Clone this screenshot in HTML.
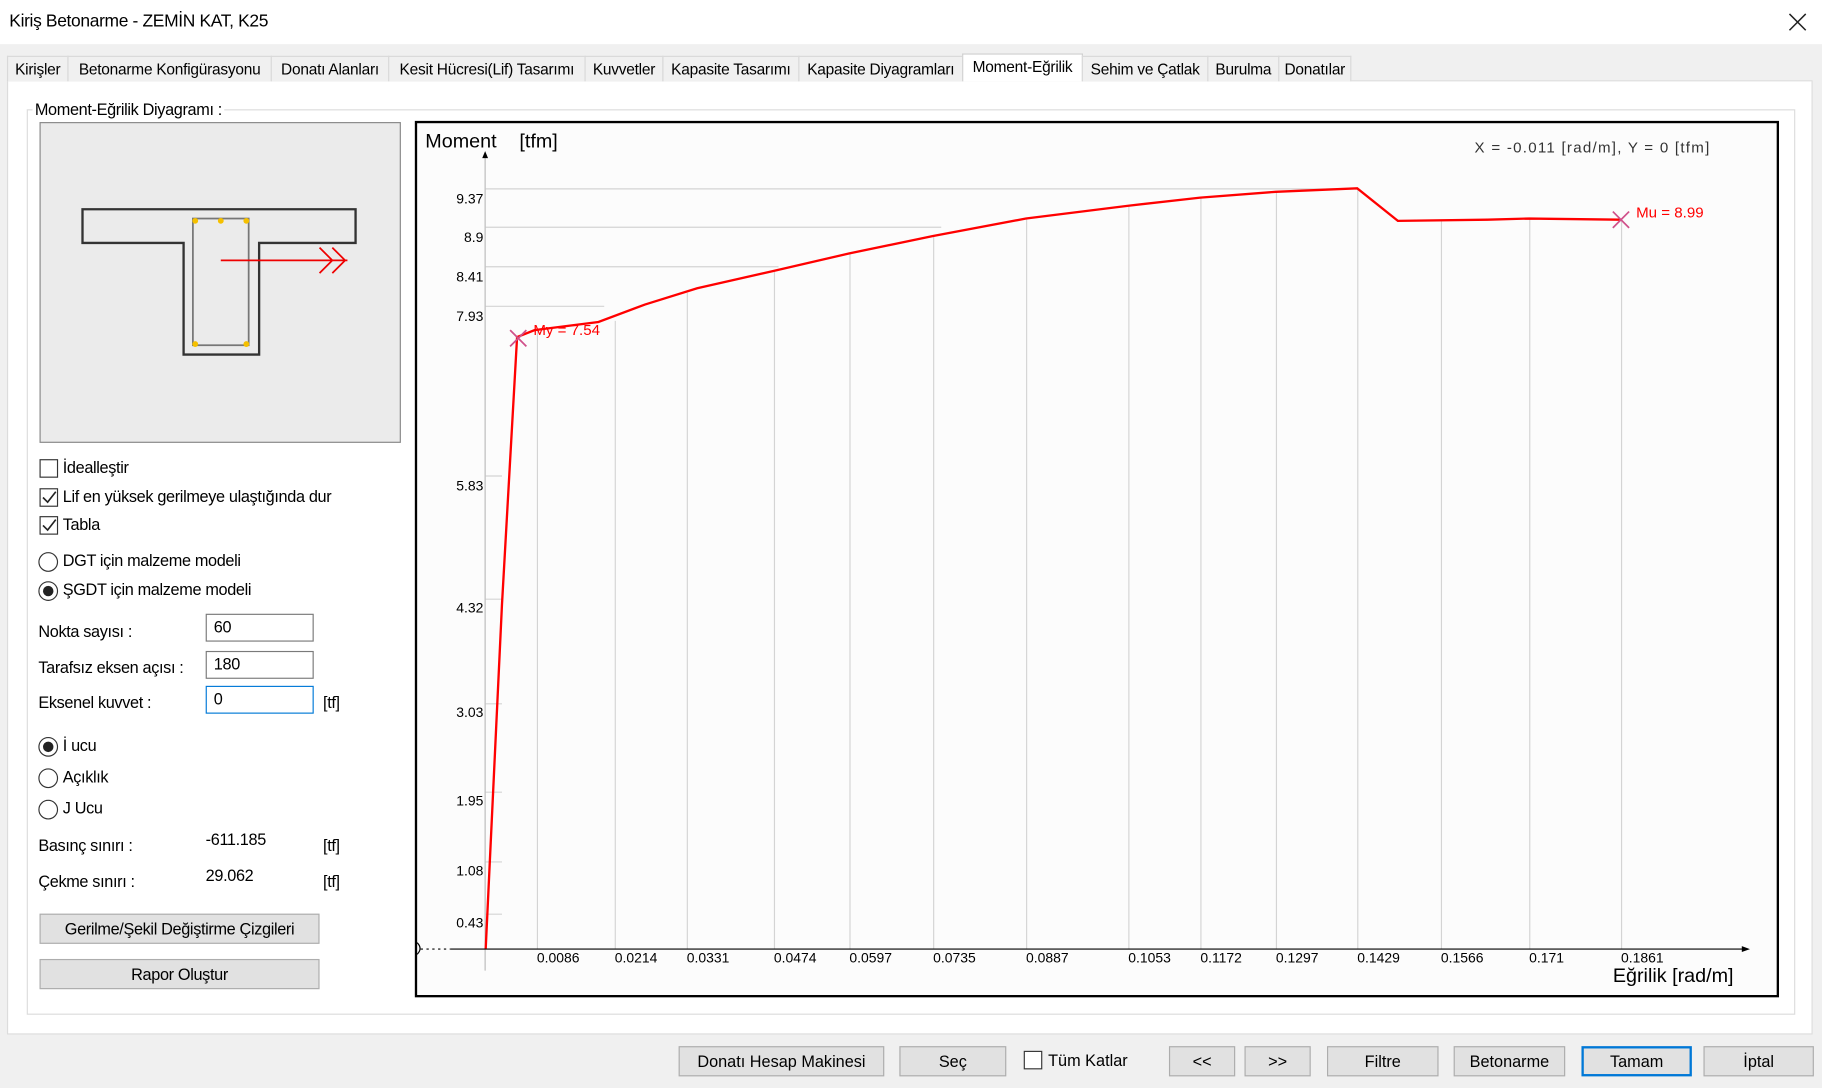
<!DOCTYPE html>
<html><head><meta charset="utf-8"><style>
*{box-sizing:border-box;margin:0;padding:0}
html,body{width:1822px;height:1088px;overflow:hidden;background:#f0f0f0}
#w{position:absolute;left:0;top:0;width:1568px;height:936px;transform:scale(1.16199,1.16239);transform-origin:0 0;font-family:"Liberation Sans",sans-serif;font-size:14px;color:#000;background:#f0f0f0}
.a{position:absolute;white-space:nowrap}
.tab{position:absolute;top:48px;height:22px;border:1px solid #d9d9d9;border-bottom:none;background:#f0f0f0;padding:3px 0 0;font-size:13.3px;text-align:center;overflow:hidden;letter-spacing:-0.2px}
.cb{position:absolute;width:16px;height:16px;border:1px solid #333;background:#fff}
.rb{position:absolute;width:17px;height:17px;border:1px solid #333;border-radius:50%;background:#fff}
.rb.on::after{content:"";position:absolute;left:3px;top:3px;width:9px;height:9px;border-radius:50%;background:#222}
.inp{position:absolute;left:177px;width:93px;height:24px;border:1px solid #7a7a7a;background:#fff;padding:2px 6px}
.btn{position:absolute;height:26px;border:1px solid #adadad;background:#e1e1e1;text-align:center;line-height:24px;font-size:14px}
</style></head><body><div id="w">
<div class="a" style="left:0;top:0;width:1568px;height:38px;background:#fff"></div>
<div class="a" style="left:8px;top:10px;font-size:15px;letter-spacing:-0.3px">Kiriş Betonarme - ZEMİN KAT, K25</div>
<svg class="a" style="left:1539px;top:11px" width="16" height="16"><path d="M1 1L15 15M15 1L1 15" stroke="#222" stroke-width="1.3"/></svg>
<div class="a" style="left:6px;top:69px;width:1554px;height:821px;background:#fff;border:1px solid #dcdcdc"></div>
<div class="tab" style="left:6px;width:53px">Kirişler</div>
<div class="tab" style="left:58px;width:176px">Betonarme Konfigürasyonu</div>
<div class="tab" style="left:233px;width:102px">Donatı Alanları</div>
<div class="tab" style="left:334px;width:170px">Kesit Hücresi(Lif) Tasarımı</div>
<div class="tab" style="left:503px;width:68px">Kuvvetler</div>
<div class="tab" style="left:570px;width:118px">Kapasite Tasarımı</div>
<div class="tab" style="left:687px;width:142px">Kapasite Diyagramları</div>
<div class="tab" style="left:828px;top:46px;height:24px;width:104px;background:#fff;border-color:#d0d0d0">Moment-Eğrilik</div>
<div class="tab" style="left:931px;width:109px">Sehim ve Çatlak</div>
<div class="tab" style="left:1039px;width:62px">Burulma</div>
<div class="tab" style="left:1100px;width:63px">Donatılar</div>
<div class="a" style="left:23px;top:94px;width:1522px;height:779px;border:1px solid #dcdcdc"></div>
<div class="a" style="left:28px;top:86px;background:#fff;padding:0 2px;letter-spacing:-0.3px">Moment-Eğrilik Diyagramı :</div>
<div class="a" style="left:34px;top:105px;width:311px;height:276px;background:#ebebeb;border:1px solid #888"></div>
<svg class="a" style="left:34px;top:105px" width="311" height="276">
<path d="M37 75H272V104H189V200H124V104H37Z" fill="none" stroke="#333" stroke-width="2"/>
<rect x="132" y="83" width="48" height="109" fill="none" stroke="#777" stroke-width="1.5"/>
<g fill="#f5c000"><circle cx="134" cy="85" r="2.5"/><circle cx="156" cy="85" r="2.5"/><circle cx="178" cy="85" r="2.5"/><circle cx="134" cy="191" r="2.5"/><circle cx="178" cy="191" r="2.5"/></g>
<path d="M156 119H265M241 108L252 119L241 130M252 108L263 119L252 130" fill="none" stroke="#e00" stroke-width="1.5"/>
</svg>
<div style="letter-spacing:-0.3px">
<div class="cb" style="left:34px;top:395px"></div><div class="a" style="left:54px;top:394px">İdealleştir</div>
<div class="cb" style="left:34px;top:420px"></div><svg class="a" style="left:36px;top:422px" width="13" height="13"><path d="M1 6L5 10L12 1" fill="none" stroke="#222" stroke-width="1.4"/></svg><div class="a" style="left:54px;top:419px">Lif en yüksek gerilmeye ulaştığında dur</div>
<div class="cb" style="left:34px;top:444px"></div><svg class="a" style="left:36px;top:446px" width="13" height="13"><path d="M1 6L5 10L12 1" fill="none" stroke="#222" stroke-width="1.4"/></svg><div class="a" style="left:54px;top:443px">Tabla</div>
<div class="rb" style="left:33px;top:475px"></div><div class="a" style="left:54px;top:474px">DGT için malzeme modeli</div>
<div class="rb on" style="left:33px;top:500px"></div><div class="a" style="left:54px;top:499px">ŞGDT için malzeme modeli</div>
<div class="a" style="left:33px;top:535px">Nokta sayısı :</div><div class="inp" style="top:528px">60</div>
<div class="a" style="left:33px;top:566px">Tarafsız eksen açısı :</div><div class="inp" style="top:560px">180</div>
<div class="a" style="left:33px;top:596px">Eksenel kuvvet :</div><div class="inp" style="top:590px;border-color:#0078d7">0</div><div class="a" style="left:278px;top:596px">[tf]</div>
<div class="rb on" style="left:33px;top:634px"></div><div class="a" style="left:54px;top:633px">İ ucu</div>
<div class="rb" style="left:33px;top:661px"></div><div class="a" style="left:54px;top:660px">Açıklık</div>
<div class="rb" style="left:33px;top:688px"></div><div class="a" style="left:54px;top:687px">J Ucu</div>
<div class="a" style="left:33px;top:719px">Basınç sınırı :</div><div class="a" style="left:177px;top:714px">-611.185</div><div class="a" style="left:278px;top:719px">[tf]</div>
<div class="a" style="left:33px;top:750px">Çekme sınırı :</div><div class="a" style="left:177px;top:745px">29.062</div><div class="a" style="left:278px;top:750px">[tf]</div>
<div class="btn" style="left:34px;top:786px;width:241px">Gerilme/Şekil Değiştirme Çizgileri</div>
<div class="btn" style="left:34px;top:825px;width:241px">Rapor Oluştur</div>
</div>
<div class="a" style="left:357px;top:104px;width:1174px;height:754px;background:#fcfcfc;border:2px solid #000"></div>
<svg class="a" style="left:0;top:0" width="1568" height="936" font-family="Liberation Sans,sans-serif">
<g stroke="#d4d4d4" stroke-width="1" fill="none">
<path d="M418 162.5H1168M418 195.5H810M418 229.5H670M418 263.5H520M418 409.5H432M418 515.5H432M418 605.5H432M418 681.5H432M418 741.5H432M418 786.5H432"/>
<path d="M462.5 284V816M529.5 276V816M591.5 252V816M666.5 234V816M731.5 218V816M803.5 203V816M883.5 188V816M971.5 177V816M1033.5 170V816M1098.5 165V816M1168.5 162V816M1240.5 190V816M1316.5 188V816M1395.5 189V816"/>
</g>
<path d="M417.5 132V835" stroke="#bbb"/><path d="M415 136L417.5 130L420 136Z" fill="#000"/>
<path d="M388 816.5H1503" stroke="#000"/><path d="M362 816.5H388" stroke="#000" stroke-dasharray="2 3"/><path d="M1499 814L1506 816.5L1499 819Z" fill="#000"/>
<path d="M359 811Q364 816 359 821" fill="none" stroke="#000"/>
<g font-size="12" text-anchor="end" fill="#000"><text x="416" y="175">9.37</text><text x="416" y="208">8.9</text><text x="416" y="242">8.41</text><text x="416" y="276">7.93</text><text x="416" y="422">5.83</text><text x="416" y="527">4.32</text><text x="416" y="617">3.03</text><text x="416" y="693">1.95</text><text x="416" y="753">1.08</text><text x="416" y="798">0.43</text></g>
<g font-size="12" fill="#000"><text x="462" y="828">0.0086</text><text x="529" y="828">0.0214</text><text x="591" y="828">0.0331</text><text x="666" y="828">0.0474</text><text x="731" y="828">0.0597</text><text x="803" y="828">0.0735</text><text x="883" y="828">0.0887</text><text x="971" y="828">0.1053</text><text x="1033" y="828">0.1172</text><text x="1098" y="828">0.1297</text><text x="1168" y="828">0.1429</text><text x="1240" y="828">0.1566</text><text x="1316" y="828">0.171</text><text x="1395" y="828">0.1861</text></g>
<text x="366" y="127" font-size="17">Moment</text><text x="447" y="127" font-size="17">[tfm]</text>
<text x="1388" y="845" font-size="17">Eğrilik [rad/m]</text>
<text x="1269" y="131" font-size="13" fill="#333" textLength="202">X = -0.011 [rad/m],  Y = 0 [tfm]</text>
<polyline points="418,816 432,520 445,290 460,284 515,277 555,262 600,248 666,233 731,218 803,203 883,188 971,177 1033,170 1098,165 1168,162 1203,190 1280,189 1316,188 1395,189" fill="none" stroke="#f00" stroke-width="2"/>
<path d="M439 284L453 298M453 284L439 298M1388 182L1402 196M1402 182L1388 196" stroke="#d0508a" stroke-width="1.5"/>
<text x="459" y="288" font-size="13" fill="#f00">My = 7.54</text>
<text x="1408" y="187" font-size="13" fill="#f00">Mu = 8.99</text>
</svg>
<div class="btn" style="left:584px;top:900px;width:177px">Donatı Hesap Makinesi</div>
<div class="btn" style="left:774px;top:900px;width:92px">Seç</div>
<div class="cb" style="left:881px;top:904px"></div><div class="a" style="left:902px;top:904px">Tüm Katlar</div>
<div class="btn" style="left:1006px;top:900px;width:57px">&lt;&lt;</div>
<div class="btn" style="left:1071px;top:900px;width:57px">&gt;&gt;</div>
<div class="btn" style="left:1142px;top:900px;width:96px">Filtre</div>
<div class="btn" style="left:1251px;top:900px;width:96px">Betonarme</div>
<div class="btn" style="left:1361px;top:900px;width:95px;border:2px solid #0078d7;line-height:22px">Tamam</div>
<div class="btn" style="left:1466px;top:900px;width:95px">İptal</div>
</div></body></html>
